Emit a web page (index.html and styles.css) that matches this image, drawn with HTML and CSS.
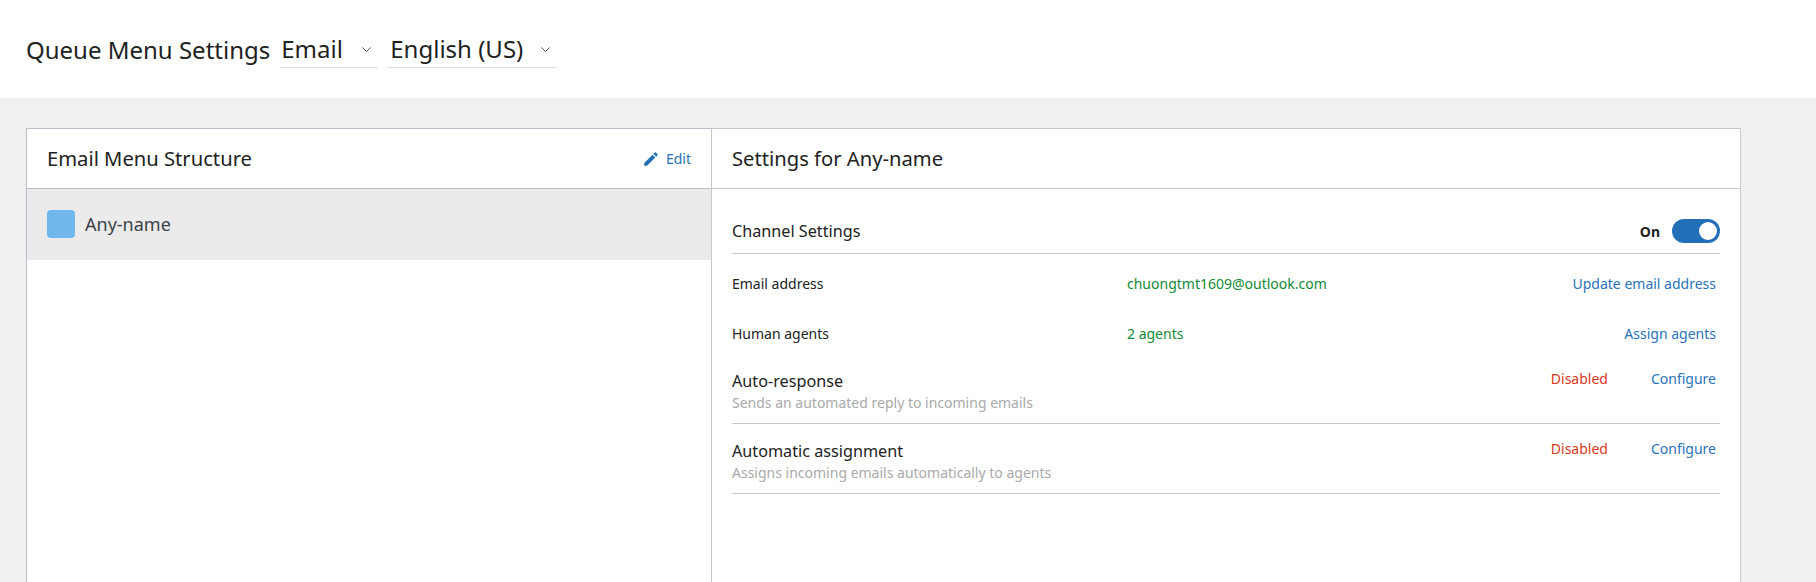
FILE: index.html
```html
<!DOCTYPE html>
<html lang="en">
<head>
<meta charset="utf-8">
<title>Queue Menu Settings</title>
<link rel="stylesheet" href="styles.css">
</head>
<body>
<header class="topbar">
  <h1 class="page-title">Queue Menu Settings</h1>
  <div class="select select-channel"><span>Email</span><svg class="chev" viewBox="0 0 9 5"><path d="M.5.5l4 4 4-4"/></svg></div>
  <div class="select select-lang"><span>English (US)</span><svg class="chev" viewBox="0 0 9 5"><path d="M.5.5l4 4 4-4"/></svg></div>
</header>
<main class="content">
  <div class="card">
    <section class="left">
      <div class="panel-head">
        <h2>Email Menu Structure</h2>
        <a class="edit"><svg class="pencil" viewBox="0 0 24 24"><path d="M3 17.25V21h3.75L17.81 9.94l-3.75-3.75L3 17.25zM20.71 7.04a1 1 0 0 0 0-1.41l-2.34-2.34a1 1 0 0 0-1.41 0l-1.83 1.83 3.75 3.75 1.83-1.83z"/></svg>Edit</a>
      </div>
      <div class="menu-item"><span class="swatch"></span><span class="menu-name">Any-name</span></div>
    </section>
    <section class="right">
      <div class="panel-head"><h2>Settings for Any-name</h2></div>
      <div class="settings">
        <div class="channel-row">
          <span class="channel-title">Channel Settings</span>
          <div class="toggle-wrap"><b>On</b><span class="toggle"><i></i></span></div>
        </div>
        <div class="info-row first"><span class="info-label">Email address</span><span class="info-value">chuongtmt1609@outlook.com</span><a class="link">Update email address</a></div>
        <div class="info-row second"><span class="info-label">Human agents</span><span class="info-value">2 agents</span><a class="link">Assign agents</a></div>
        <div class="feature">
          <div class="feature-text"><div class="feature-title">Auto-response</div><div class="feature-desc">Sends an automated reply to incoming emails</div></div>
          <span class="disabled">Disabled</span><a class="link">Configure</a>
        </div>
        <div class="feature">
          <div class="feature-text"><div class="feature-title">Automatic assignment</div><div class="feature-desc">Assigns incoming emails automatically to agents</div></div>
          <span class="disabled">Disabled</span><a class="link">Configure</a>
        </div>
      </div>
    </section>
  </div>
</main>
</body>
</html>
```
FILE: styles.css
```css
* { box-sizing: border-box; }
html, body { margin: 0; height: 100%; overflow: hidden; }
body { background: #f0f0f0; font-family: "Noto Sans", sans-serif; color: #222; display: flex; flex-direction: column; }
.topbar { background: #fff; height: 98px; flex: none; display: flex; align-items: center; padding-left: 26px; }
.page-title { font-size: 24px; font-weight: 400; margin: 0 10px -1px 0; line-height: 32px; }
.select { display: flex; align-items: center; justify-content: space-between; height: 36px; border-bottom: 1px solid #ddd; font-size: 24px; padding: 0 7px 0 0; margin-right: 9px; margin-top: 2px; }
.select span { margin-top: -2px; }
.select-channel { width: 97px; margin-left: 1px; }
.select-lang { width: 170px; padding-left: 3px; }
.chev { width: 9px; height: 5px; fill: none; stroke: #555; stroke-width: 1; margin-top: -1px; }
.content { flex: 1; padding: 30px 0 0 26px; }
.card { width: 1715px; height: 460px; background: #fff; display: flex; }
.left { width: 686px; border: 1px solid #b7bfce; border-right: 1px solid #c8c8c8; flex: none; }
.right { flex: 1; border: 1px solid #c8c8c8; border-left: 0; }
.panel-head { height: 60px; border-bottom: 1px solid #c8c8c8; display: flex; align-items: center; justify-content: space-between; padding: 0 20px; }
.left .panel-head { border-bottom-color: #b7bfce; }
.panel-head h2 { font-size: 20.2px; font-weight: 400; margin: -2px 0 0; line-height: 28px; }
.edit { color: #2a73ba; font-size: 14px; display: flex; align-items: center; gap: 6px; }
.pencil { width: 18px; height: 18px; fill: #226fb7; }
.menu-item { height: 71px; background: #ebebeb; display: flex; align-items: center; padding: 0 0 2px 20px; gap: 10px; }
.swatch { width: 28px; height: 28px; border-radius: 4px; background: #6fb7ec; }
.menu-name { font-size: 18px; color: #3c4248; }
.settings { padding: 0 20px; }
.channel-row { height: 65px; padding-top: 20px; border-bottom: 1px solid #c8c8c8; display: flex; align-items: center; justify-content: space-between; }
.channel-title { font-size: 16.2px; }
.toggle-wrap { display: flex; align-items: center; gap: 12px; }
.toggle-wrap b { font-size: 14px; }
.toggle { width: 48px; height: 24px; border-radius: 12px; background: #226fb7; display: flex; justify-content: flex-end; align-items: center; padding-right: 3px; }
.toggle i { width: 18px; height: 18px; border-radius: 50%; background: #fff; }
.info-row { display: flex; align-items: center; height: 58px; font-size: 14px; }
.info-row.second { height: 42px; }
.info-label { width: 395px; }
.info-value { color: #138a36; flex: 1; }
.link { color: #2a73ba; font-size: 14px; margin-right: 4px; }
.feature { display: flex; align-items: flex-start; height: 70px; border-bottom: 1px solid #c8c8c8; padding-top: 16px; font-size: 14px; }
.feature-text { flex: 1; }
.feature-title { font-size: 16.2px; line-height: 22px; }
.feature-desc { font-size: 14px; color: #aaa; line-height: 20px; margin-top: 1px; }
.disabled { color: #d8391c; margin-right: 43px; line-height: 18px; }
.feature .link { line-height: 18px; }
```
